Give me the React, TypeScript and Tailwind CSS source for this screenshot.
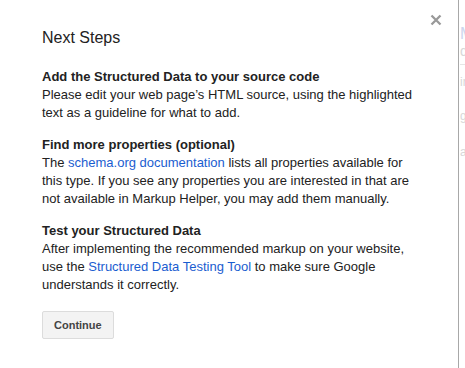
const Link = ({ children }: { children: React.ReactNode }) => (
  <a href="#" className="text-[#1a5dd0]">
    {children}
  </a>
);

const Section = ({
  title,
  children,
}: {
  title: string;
  children: React.ReactNode;
}) => (
  <div className="mb-[14px]">
    <div className="font-bold">{title}</div>
    <div>{children}</div>
  </div>
);

export default function App() {
  return (
    <div className="flex h-[368px] w-[465px] overflow-hidden bg-white font-['Liberation_Sans',Arial,sans-serif]">
      <div className="relative h-full w-[459px] shrink-0 border-r-[1.5px] border-[#a8a8a8] bg-white">
        <button className="absolute right-[14px] top-[12px] flex h-[16px] w-[16px] items-center justify-center text-[#999]">
          <svg width="12" height="12" viewBox="0 0 12 12">
            <path
              d="M1.5 1.5 L10.5 10.5 M10.5 1.5 L1.5 10.5"
              stroke="currentColor"
              strokeWidth="2.3"
            />
          </svg>
        </button>
        <div className="w-[421px] pl-[42px] pt-[28px] text-[13px] leading-[18px] text-[#222]">
          <h2 className="mb-[20px] text-[16px] leading-[20px] text-[#222]">
            Next Steps
          </h2>
          <Section title="Add the Structured Data to your source code">
            Please edit your web page’s HTML source, using the highlighted text
            as a guideline for what to add.
          </Section>
          <Section title="Find more properties (optional)">
            The <Link>schema.org documentation</Link> lists all properties
            available for this type. If you see any properties you are
            interested in that are not available in Markup Helper, you may add
            them manually.
          </Section>
          <Section title="Test your Structured Data">
            After implementing the recommended markup on your website, use the{" "}
            <Link>Structured Data Testing Tool</Link> to make sure Google
            understands it correctly.
          </Section>
          <button className="mt-[3px] h-[28px] rounded-[2px] border border-[#dcdcdc] bg-[#f3f3f3] px-[11px] text-[11px] font-bold text-[#444]">
            Continue
          </button>
        </div>
      </div>
      <div className="flex-1 overflow-hidden bg-white pl-[1px] text-[#c8c8c8] opacity-70">
        <div className="mt-[26px] text-[16px] leading-[16px] text-[#b8c4e6]">M</div>
        <div className="text-[14px] leading-[18px]">d</div>
        <div className="mt-[4px] h-px w-full bg-[#dcdcdc]" />
        <div className="mt-[10px] text-[12px] leading-[14px]">ir</div>
        <div className="mt-[20px] text-[12px] leading-[14px]">ge</div>
        <div className="mt-[22px] text-[12px] leading-[14px]">a</div>
      </div>
    </div>
  );
}
